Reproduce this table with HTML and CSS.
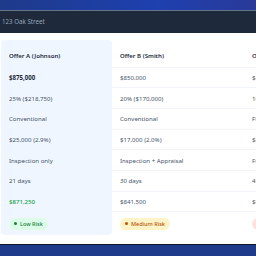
FILE: index.html
```html
<!DOCTYPE html>
<html>
<head>
<meta charset="utf-8">
<link rel="stylesheet" href="styles.css">
</head>
<body>
<div class="hero"></div>
<div class="addr">123 Oak Street</div>
<div class="content">
  <table class="cmp">
    <tr class="head">
      <th class="best">Offer A (Johnson)</th>
      <th class="colb">Offer B (Smith)</th>
      <th>Offer C (Lee)</th>
    </tr>
    <tr>
      <td class="best strong">$875,000</td>
      <td>$850,000</td>
      <td>$840,000</td>
    </tr>
    <tr>
      <td class="best">25% ($218,750)</td>
      <td>20% ($170,000)</td>
      <td>10% ($84,000)</td>
    </tr>
    <tr>
      <td class="best">Conventional</td>
      <td>Conventional</td>
      <td>FHA</td>
    </tr>
    <tr>
      <td class="best">$25,000 (2.9%)</td>
      <td>$17,000 (2.0%)</td>
      <td>$8,400 (1.0%)</td>
    </tr>
    <tr>
      <td class="best">Inspection only</td>
      <td>Inspection + Appraisal</td>
      <td>Full</td>
    </tr>
    <tr>
      <td class="best">21 days</td>
      <td>30 days</td>
      <td>45 days</td>
    </tr>
    <tr>
      <td class="best net">$871,250</td>
      <td>$841,500</td>
      <td>$830,000</td>
    </tr>
    <tr class="risk">
      <td class="best last"><span class="badge low"><i></i>Low Risk</span></td>
      <td><span class="badge med"><i></i>Medium Risk</span></td>
      <td><span class="badge high"><i></i>High Risk</span></td>
    </tr>
  </table>
</div>
<div class="footer"></div>
</body>
</html>
```

FILE: styles.css
```css
html, body {
  margin: 0;
  padding: 0;
  background: #ffffff;
  width: 256px;
  height: 256px;
  overflow: hidden;
  font-family: "Noto Sans", Inter, sans-serif;
}
.hero {
  height: 10px;
  background: linear-gradient(90deg, #1e3a8a, #1e40af 60%, #2a3a9a);
  border-bottom: 1px solid #64748b;
}
.addr {
  height: 22px;
  background: #1e293b;
  color: #94a3b8;
  font-size: 6.2px;
  line-height: 22px;
  padding-left: 2px;
  white-space: nowrap;
}
.content {
  height: 211px;
  padding: 7px 0 0 1px;
  box-sizing: border-box;
  overflow: hidden;
}
.cmp {
  border-collapse: collapse;
  table-layout: fixed;
  width: 380px;
  font-size: 6.1px;
  color: #475569;
}
.cmp th, .cmp td {
  text-align: left;
  padding: 0 0 0 8px;
  height: 20.7px;
  white-space: nowrap;
  border-bottom: 1px solid #f1f5f9;
  box-sizing: border-box;
}
.cmp th {
  font-weight: 600;
  color: #1e293b;
  height: 27px;
  padding-top: 5px;
}
.cmp th.best { width: 111px; }
.cmp th.colb { width: 132px; }
.cmp .best {
  background: #eff6ff;
  border-bottom-color: #eff6ff;
}
.cmp tr.head th.best { border-top-left-radius: 4px; border-top-right-radius: 4px; }
.cmp .best.last { border-bottom-left-radius: 4px; border-bottom-right-radius: 4px; }
.cmp .strong { font-weight: 700; color: #1e293b; }
.cmp .net { color: #16a34a; font-weight: 500; }
.cmp tr.risk td { height: 23px; border-bottom: none; }
.badge {
  display: inline-flex;
  align-items: center;
  gap: 3px;
  height: 12px;
  padding: 0 5px;
  border-radius: 6px;
  font-size: 5.5px;
  font-weight: 500;
}
.badge i {
  width: 3px;
  height: 3px;
  border-radius: 50%;
  background: currentColor;
}
.badge.low { background: #dcfce7; color: #15803d; }
.badge.med { background: #fef3c7; color: #b45309; }
.badge.high { background: #fee2e2; color: #b91c1c; }
.footer {
  height: 12px;
  background: #1e3a8a;
  border-top: 1px solid #0f172a;
}
```
